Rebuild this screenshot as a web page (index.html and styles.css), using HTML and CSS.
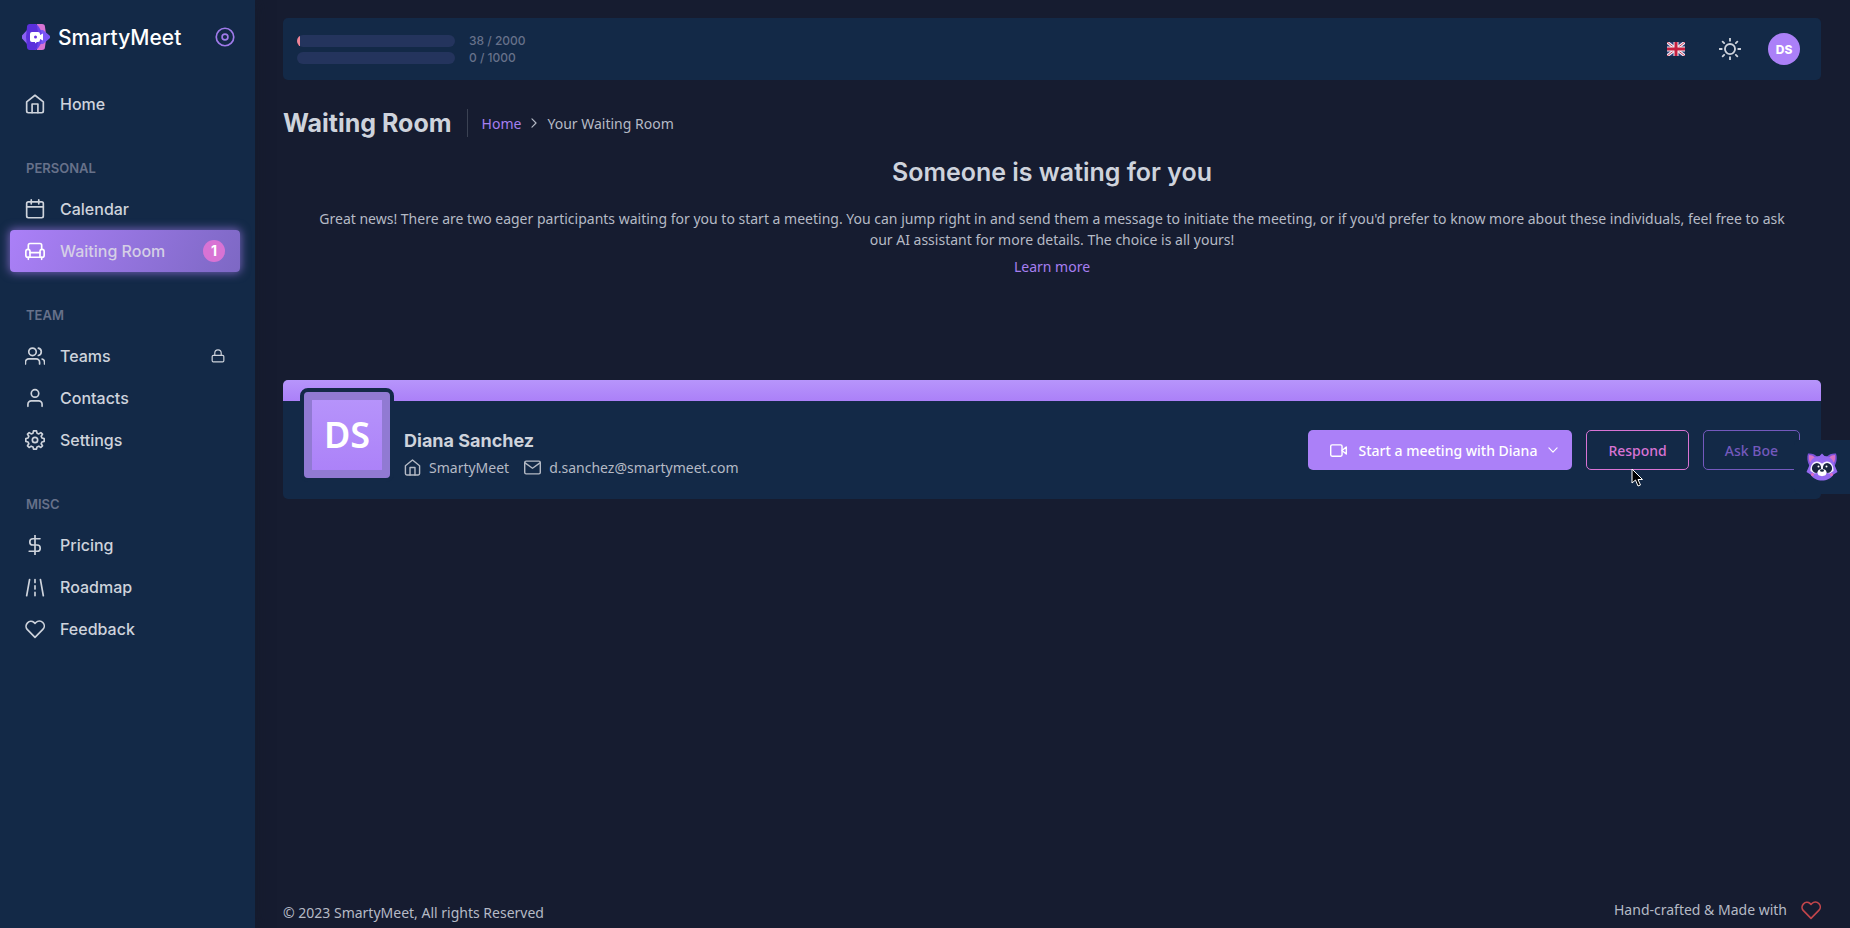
FILE: index.html
```html
<!DOCTYPE html>
<html lang="en">
<head>
  <meta charset="UTF-8" />
  <meta name="viewport" content="width=device-width, initial-scale=1.0"/>
  <title>SmartyMeet - Waiting Room</title>
  <link rel="stylesheet" href="styles.css">
</head>

<body>

  <!-- shared icons -->
  <svg class="sprite" aria-hidden="true">
    <symbol id="i-home" viewBox="0 0 24 24"><path d="M2 9.500 12 1.500l10 8V20.500a2 2 0 0 1-2 2H4a2 2 0 0 1-2-2z"/><path d="M8.500 22.500V12h7v10.500"/></symbol>
    <symbol id="i-calendar" viewBox="0 0 24 24"><rect x="2" y="3.500" width="20" height="19" rx="2"/><path d="M16.500 1v5M7.500 1v5M2 9.500h20"/></symbol>
    <symbol id="i-sofa" viewBox="0 0 24 24"><path d="M4 10V5a2 2 0 0 1 2-2h12a2 2 0 0 1 2 2v5"/><path d="M1 12.500a2.500 2.500 0 0 1 5 0V14h12v-1.500a2.500 2.500 0 0 1 5 0V17a2.500 2.500 0 0 1-2.500 2.500h-17A2.500 2.500 0 0 1 1 17z"/><path d="M6 14v5M18 14v5M4 19.500V22M20 19.500V22"/></symbol>
    <symbol id="i-users" viewBox="0 0 24 24"><path d="M17.500 21.500v-2a4 4 0 0 0-4-4h-9a4 4 0 0 0-4 4v2"/><circle cx="9" cy="7" r="4.500"/><path d="M23.500 21.500v-2a4 4 0 0 0-3-3.900M16 2.600a4.500 4.500 0 0 1 0 8.800"/></symbol>
    <symbol id="i-user" viewBox="0 0 24 24"><path d="M20.500 22v-2.500a4 4 0 0 0-4-4h-9a4 4 0 0 0-4 4V22"/><circle cx="12" cy="6.500" r="4.500"/></symbol>
    <symbol id="i-gear" viewBox="0 0 24 24"><circle cx="12" cy="12" r="3.200"/><path d="M10.200 1h3.600l.6 2.800 2.200.9L19 3.100 21 5l-1.600 2.400.9 2.200 2.700.6v3.600l-2.700.6-.9 2.200L21 19l-2 2-2.400-1.600-2.200.9-.6 2.700h-3.600l-.6-2.700-2.200-.9L5 21l-2-2 1.600-2.400-.9-2.200L1 13.800v-3.600l2.700-.6.9-2.200L3 5l2-1.900 2.400 1.600 2.200-.9z"/></symbol>
    <symbol id="i-dollar" viewBox="0 0 24 24"><path d="M12 0v24M18 4.500H9.500a3.700 3.700 0 0 0 0 7.500h5a3.700 3.700 0 0 1 0 7.500H5"/></symbol>
    <symbol id="i-road" viewBox="0 0 24 24"><path d="M5.500 3 2 22.500M18.500 3 22 22.500M12 3v3.500M12 10.500v4M12 18.500v4"/></symbol>
    <symbol id="i-heart" viewBox="0 0 24 24"><path d="M21.400 4.200a5.900 5.900 0 0 0-8.300 0L12 5.300l-1.100-1.100a5.900 5.900 0 0 0-8.300 8.300L12 22l9.400-9.500a5.900 5.900 0 0 0 0-8.300z"/></symbol>
    <symbol id="i-lock" viewBox="0 0 24 24"><rect x="2" y="11" width="20" height="11" rx="2"/><path d="M6.500 11V7a5.500 5.500 0 0 1 11 0v4"/></symbol>
    <symbol id="i-disc" viewBox="0 0 24 24"><circle cx="12" cy="12" r="10.500"/><circle cx="12" cy="12" r="3.500"/></symbol>
    <symbol id="i-sun" viewBox="0 0 24 24"><circle cx="12" cy="12" r="5.500"/><path d="M12 .5v2.500M12 21v2.500M.5 12H3M21 12h2.500M4 4l1.600 1.600M18.400 18.400 20 20M4 20l1.600-1.600M18.400 5.600 20 4"/></symbol>
    <symbol id="i-mail" viewBox="0 0 24 24"><rect x="1" y="3" width="22" height="18" rx="2"/><path d="m1.500 5.500 10.500 7.500 10.500-7.500"/></symbol>
    <symbol id="i-video" viewBox="0 0 24 24"><rect x="1" y="4" width="16" height="16" rx="2"/><path d="m23 7-6 5 6 5z"/></symbol>
    <symbol id="i-down" viewBox="0 0 24 24"><path d="m5 8.500 7 7 7-7"/></symbol>
    <symbol id="i-right" viewBox="0 0 24 24"><path d="m8.500 5 7 7-7 7"/></symbol>
  </svg>

  <aside class="sidebar">
    <div class="brand">
      <svg class="brand-logo" viewBox="0 0 28 28" aria-hidden="true">
        <path fill="#d873d4" d="M15 1h5a3 3 0 0 1 3 3l1 7H12zM15 27h5a3 3 0 0 0 3-3l1-7H12z"/>
        <path fill="#8c62f2" d="M0 12.500 6 6v16l-6-6.500a2 2 0 0 1 0-3z"/>
        <path fill="#7a55f6" d="M14 7h7l6.500 5.500a2 2 0 0 1 0 3L21 21h-7z"/>
        <path fill="#6a42ec" d="M8 1h6c3 2 6 7 6 13s-3 11-6 13H8l-3-3V4z"/>
        <path fill="#5b30dc" d="M8 1h4a3 3 0 0 1 3 3l2 10-2 10a3 3 0 0 1-3 3H8a3 3 0 0 1-3-3L4 14 5 4a3 3 0 0 1 3-3z"/>
        <path fill="#fff" d="M8 11a2 2 0 0 1 2-2h6a2 2 0 0 1 2 2v1l3-1.500v7L18 16v1a2 2 0 0 1-2 2h-1l-2 1.500V19h-3a2 2 0 0 1-2-2z"/>
        <circle cx="13.500" cy="14" r="1.500" fill="#6a35e0"/>
      </svg>
      <span class="brand-name">SmartyMeet</span>
      <button class="pin" type="button" aria-label="Toggle menu"><svg class="icon"><use href="#i-disc"/></svg></button>
    </div>

    <nav class="menu">
      <a class="menu-item" href="#"><svg class="icon"><use href="#i-home"/></svg>Home</a>

      <h6 class="menu-title">PERSONAL</h6>
      <a class="menu-item" href="#"><svg class="icon"><use href="#i-calendar"/></svg>Calendar</a>
      <a class="menu-item active" href="#"><svg class="icon"><use href="#i-sofa"/></svg>Waiting Room<span class="count">1</span></a>

      <h6 class="menu-title">TEAM</h6>
      <a class="menu-item" href="#"><svg class="icon"><use href="#i-users"/></svg>Teams<svg class="icon lock"><use href="#i-lock"/></svg></a>
      <a class="menu-item" href="#"><svg class="icon"><use href="#i-user"/></svg>Contacts</a>
      <a class="menu-item" href="#"><svg class="icon"><use href="#i-gear"/></svg>Settings</a>

      <h6 class="menu-title">MISC</h6>
      <a class="menu-item" href="#"><svg class="icon"><use href="#i-dollar"/></svg>Pricing</a>
      <a class="menu-item" href="#"><svg class="icon"><use href="#i-road"/></svg>Roadmap</a>
      <a class="menu-item" href="#"><svg class="icon"><use href="#i-heart"/></svg>Feedback</a>
    </nav>
  </aside>

  <div class="page">
    <header class="topbar">
      <div class="usage">
        <div class="usage-row"><div class="bar"><div class="bar-fill" style="width: 2%"></div></div><span>38 / 2000</span></div>
        <div class="usage-row"><div class="bar"></div><span>0 / 1000</span></div>
      </div>
      <div class="tools">
        <button class="tool" type="button" aria-label="Language">
          <svg class="flag" viewBox="0 0 18 14">
            <path fill="#293a73" d="M0 0h18v14H0z"/>
            <path stroke="#f1eef5" stroke-width="3" d="m0 0 18 14M18 0 0 14"/>
            <path stroke="#d0405c" stroke-width="1" d="m0 0 18 14M18 0 0 14"/>
            <path stroke="#f1eef5" stroke-width="5" d="M9 0v14M0 7h18"/>
            <path stroke="#c41e3f" stroke-width="3" d="M9 0v14M0 7h18"/>
          </svg>
        </button>
        <button class="tool" type="button" aria-label="Light mode"><svg class="icon sun"><use href="#i-sun"/></svg></button>
        <button class="user" type="button">DS</button>
      </div>
    </header>

    <main>
      <div class="heading">
        <h1>Waiting Room</h1>
        <nav class="crumbs">
          <a href="#">Home</a>
          <svg class="icon"><use href="#i-right"/></svg>
          <span>Your Waiting Room</span>
        </nav>
      </div>

      <section class="intro">
        <h2>Someone is wating for you</h2>
        <p>Great news! There are two eager participants waiting for you to start a meeting. You can jump right in and send them a message to initiate the meeting, or if you'd prefer to know more about these individuals, feel free to ask our AI assistant for more details. The choice is all yours!</p>
        <a href="#">Learn more</a>
      </section>

      <article class="guest">
        <div class="guest-banner"></div>
        <div class="guest-body">
          <div class="guest-avatar">DS</div>
          <div class="guest-info">
            <h3>Diana Sanchez</h3>
            <div class="guest-meta">
              <span><svg class="icon"><use href="#i-home"/></svg>SmartyMeet</span>
              <span><svg class="icon"><use href="#i-mail"/></svg>d.sanchez@smartymeet.com</span>
            </div>
          </div>
          <div class="guest-actions">
            <button class="btn btn-start" type="button"><svg class="icon"><use href="#i-video"/></svg>Start a meeting with Diana<svg class="icon caret"><use href="#i-down"/></svg></button>
            <button class="btn btn-respond" type="button">Respond
              <svg class="pointer" viewBox="0 0 12 19" aria-hidden="true"><path fill="#000" stroke="#fff" d="M1 1v14l3.500-3 2.500 6 2.500-1L7 11.500h4.500z"/></svg>
            </button>
            <button class="btn btn-ask" type="button">Ask Boe</button>
          </div>
        </div>
      </article>
    </main>

    <footer>
      <span>© 2023 SmartyMeet, All rights Reserved</span>
      <span class="made">Hand-crafted &amp; Made with <svg class="icon"><use href="#i-heart"/></svg></span>
    </footer>
  </div>

  <button class="boe" type="button" aria-label="Boe assistant">
    <svg viewBox="0 0 32 30">
      <path fill="#7d52d8" d="M2 1.500c3-.5 7 .5 9.500 3.500L3.500 14C1 10 .8 5 2 1.500zM30 1.500c-3-.5-7 .5-9.500 3.500l8 9c2.500-4 2.700-9 1.500-12.500z"/>
      <path fill="#d870c6" d="M3 3c2 0 4.500.8 6 2.500L4 11C2.800 8 2.600 5.500 3 3zM29 3c-2 0-4.500.8-6 2.500l5 5.500c1.200-3 1.400-5.500 1-8z"/>
      <path fill="#9468f0" d="M16 1.500 18.500 4c5.500.3 9 4 10 9l3 7-4 2.500c-2.500 4-7 6-11.500 6s-9-2-11.500-6l-4-2.500 3-7c1-5 4.500-8.700 10-9z"/>
      <path fill="#f6f3ff" d="M4.500 19c-.5-6 3-10 7-9.500 2.500.3 3.500 2 4.500 2s2-1.700 4.500-2c4-.5 7.500 3.500 7 9.500l-4 2.500-4-1-3.500 4-3.500-4-4 1z"/>
      <ellipse cx="10.500" cy="16" rx="4.500" ry="5" fill="#18253f" transform="rotate(25 10.500 16)"/>
      <ellipse cx="21.500" cy="16" rx="4.500" ry="5" fill="#18253f" transform="rotate(-25 21.500 16)"/>
      <circle cx="12.500" cy="14.500" r="1" fill="#fff"/><circle cx="20.500" cy="14.500" r="1" fill="#fff"/>
      <ellipse cx="16" cy="20.500" rx="4.500" ry="3.500" fill="#fff"/>
      <ellipse cx="16" cy="18.500" rx="2" ry="1.300" fill="#18253f"/>
      <circle cx="6.500" cy="22.500" r="1.500" fill="#e070c0"/><circle cx="25.500" cy="22.500" r="1.500" fill="#e070c0"/>
    </svg>
  </button>

</body>
</html>
```

FILE: styles.css
```css
* {
  box-sizing: border-box;
}

body {
  margin: 0;
  min-height: 100vh;
  display: flex;
  background: #161c30;
  color: #b5bac5;
  font-family: "Noto Sans", sans-serif;
  font-size: 14px;
  line-height: 21px;
}

h1, h2, h3, h6, p {
  margin: 0;
}

a {
  color: #a67ff0;
  text-decoration: none;
}

button {
  font: inherit;
  color: inherit;
  background: none;
  border: 0;
  padding: 0;
  cursor: pointer;
}

.sprite {
  display: none;
}

.icon {
  width: 20px;
  height: 20px;
  flex: none;
  fill: none;
  stroke: currentColor;
  stroke-width: 2;
  stroke-linecap: round;
  stroke-linejoin: round;
}

/* sidebar */
.sidebar {
  width: 255px;
  flex: none;
  padding: 0 15px 0 10px;
  background: #132947;
  box-shadow: 0 0 15px rgba(20, 25, 40, 0.5);
  font-family: Inter, sans-serif;
}

.brand {
  display: flex;
  align-items: center;
  height: 74px;
  padding: 0 5px 0 12px;
}

.brand-logo {
  width: 28px;
  height: 28px;
}

.brand-name {
  margin-left: 8px;
  color: #fff;
  font-size: 21px;
  font-weight: 500;
}

.pin {
  display: flex;
  margin-left: auto;
  color: #9f7aea;
}

.menu {
  display: flex;
  flex-direction: column;
  padding-top: 9px;
}

.menu-item {
  display: flex;
  align-items: center;
  height: 42px;
  padding: 0 15px;
  gap: 15px;
  border-radius: 4px;
  color: #ced3dc;
  font-size: 16px;
  font-weight: 500;
}

.menu-item.active {
  background: linear-gradient(118deg, #ab80f8, #7d68c4);
  box-shadow: 0 0 10px 1px rgba(159, 122, 234, 0.7);
  color: #d5cfe6;
}

.menu-item.active .icon {
  color: #fff;
}

.menu-title {
  margin: 33px 16px 10px;
  color: #67718a;
  font-size: 13px;
  font-weight: 600;
  line-height: 20px;
}

.count {
  width: 22px;
  height: 22px;
  margin-left: auto;
  border-radius: 50%;
  background: #d873d4;
  color: #fff;
  font-size: 14px;
  font-weight: 700;
  line-height: 22px;
  text-align: center;
}

.menu-item .lock {
  width: 14px;
  height: 14px;
  margin-left: auto;
}

/* page */
.page {
  flex: 1;
  min-width: 0;
  min-height: 100vh;
  display: flex;
  flex-direction: column;
  padding: 18px 29px 0 28px;
}

.topbar {
  display: flex;
  align-items: center;
  justify-content: space-between;
  height: 62px;
  padding: 0 21px 0 14px;
  border-radius: 5px;
  background: #132947;
}

.usage-row {
  display: flex;
  align-items: center;
  gap: 14px;
  height: 17px;
  color: #67718a;
  font-family: Inter, sans-serif;
  font-size: 12px;
  font-weight: 500;
}

.bar {
  width: 158px;
  height: 12px;
  overflow: hidden;
  border-radius: 6px;
  background: #24345d;
}

.bar-fill {
  height: 100%;
  background: #ef8496;
}

.tools {
  display: flex;
  align-items: center;
  gap: 34px;
}

.tool {
  display: flex;
}

.flag {
  width: 18px;
  height: 14px;
}

.sun {
  width: 22px;
  height: 22px;
  color: #ced3dc;
}

.user {
  width: 32px;
  height: 32px;
  margin-left: -7px;
  border-radius: 50%;
  background: #ab80f8;
  color: #fff;
  font-family: Inter, sans-serif;
  font-size: 12px;
  font-weight: 800;
}

.heading {
  display: flex;
  align-items: center;
  height: 28px;
  margin-top: 29px;
}

h1, h2, h3 {
  font-family: Inter, sans-serif;
  font-weight: 700;
  color: #ced3dc;
}

h1, h2 {
  font-size: 25px;
  line-height: 30px;
}

h2 {
  font-weight: 600;
}

.crumbs {
  display: flex;
  align-items: center;
  gap: 6px;
  height: 28px;
  margin-left: 15px;
  padding-left: 14px;
  border-left: 1px solid #3b4253;
}

.crumbs .icon {
  width: 14px;
  height: 14px;
}

.intro {
  margin-top: 20px;
  text-align: center;
}

.intro p {
  margin: 21px 24px 6px;
}

/* guest card */
.guest {
  margin-top: 103px;
  border-radius: 5px;
  background: #132947;
}

.guest-banner {
  height: 21px;
  border-radius: 5px 5px 0 0;
  background: linear-gradient(#b795fb, #ab80f8);
}

.guest-body {
  display: flex;
  height: 98px;
  padding: 0 21px 0 17px;
}

.guest-avatar {
  flex: none;
  width: 94px;
  height: 94px;
  margin-top: -13px;
  border: 4px solid #132947;
  border-radius: 8px;
  background: linear-gradient(#b795fb, #ab80f8);
  box-shadow: inset 0 0 0 8px #917ad3;
  color: #fff;
  font-size: 36px;
  font-weight: 600;
  line-height: 86px;
  text-align: center;
}

.guest-info {
  margin: 29px 0 0 10px;
}

h3 {
  font-size: 18px;
  line-height: 22px;
}

.guest-meta {
  display: flex;
  gap: 15px;
  margin-top: 5px;
}

.guest-meta span {
  display: flex;
  align-items: center;
  gap: 8px;
}

.guest-meta .icon {
  width: 17px;
  height: 17px;
}

.guest-actions {
  display: flex;
  gap: 14px;
  margin: 29px 0 0 auto;
}

.btn {
  display: flex;
  align-items: center;
  height: 40px;
  padding: 0 21px;
  border: 1px solid transparent;
  border-radius: 5px;
  font-weight: 500;
}

.btn-start {
  padding-right: 11px;
  background: #ab80f8;
  color: #fff;
}

.btn .icon {
  width: 17px;
  height: 17px;
  margin-right: 12px;
}

.btn .caret {
  width: 14px;
  height: 14px;
  margin: 0 0 0 9px;
}

.btn-respond {
  position: relative;
  border-color: #d873d4;
  color: #d873d4;
}

.btn-ask {
  border-color: #7459bd;
  color: #7459bd;
}

.pointer {
  position: absolute;
  top: 37px;
  left: 44px;
  width: 12px;
  height: 19px;
}

/* assistant tab */
.boe {
  position: fixed;
  top: 440px;
  right: 0;
  display: flex;
  align-items: center;
  width: 56px;
  height: 54px;
  padding-left: 12px;
  border-radius: 5px 0 0 5px;
  background: #132947;
}

.boe svg {
  width: 32px;
  height: 30px;
}

footer {
  display: flex;
  justify-content: space-between;
  margin-top: auto;
  padding-bottom: 5px;
  align-items: flex-end;
}

.made {
  display: flex;
  align-items: center;
  gap: 14px;
  padding-bottom: 3px;
}

.made .icon {
  color: #c1454b;
}
```
